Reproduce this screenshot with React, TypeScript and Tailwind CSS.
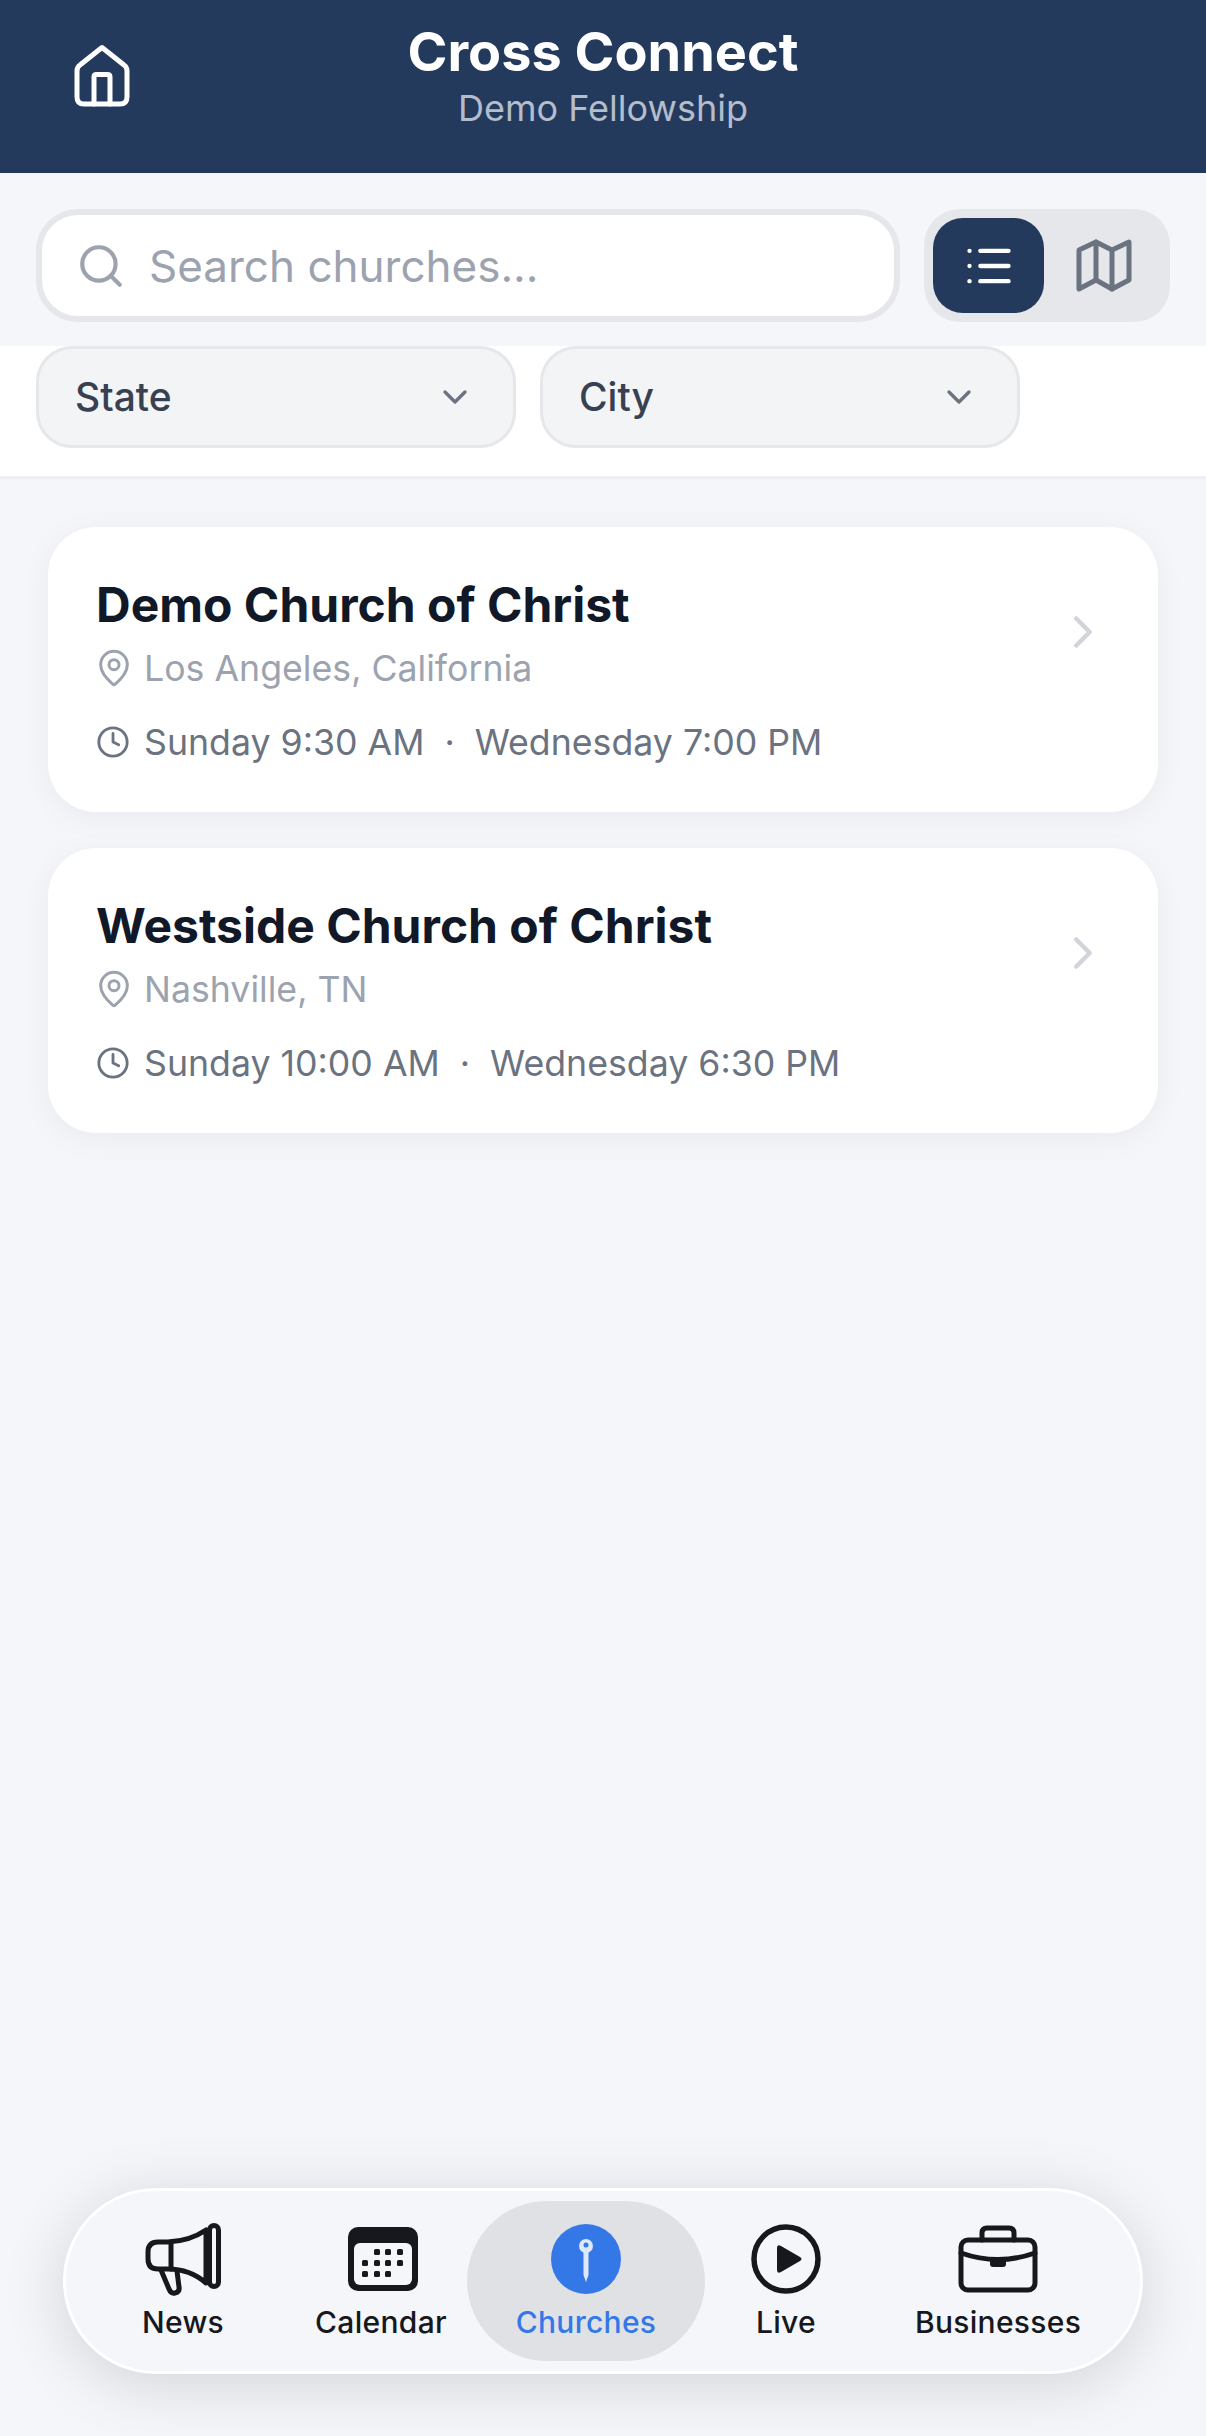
import React from 'react';
import { ChevronDown, ChevronRight, Clock, List, MapPin, Search } from 'lucide-react';

const churches = [
  { name: 'Demo Church of Christ', place: 'Los Angeles, California', sunday: 'Sunday 9:30 AM', midweek: 'Wednesday 7:00 PM' },
  { name: 'Westside Church of Christ', place: 'Nashville, TN', sunday: 'Sunday 10:00 AM', midweek: 'Wednesday 6:30 PM' },
];

function HomeIcon() {
  return (
    <svg width="60" height="64" viewBox="0 0 60 64" fill="none" stroke="#fff" strokeWidth="5" strokeLinejoin="round" strokeLinecap="round">
      <path d="M30 4.5 L52 22 Q55 24 55 28 V54 Q55 61 48 61 H12 Q5 61 5 54 V28 Q5 24 8 22 Z" />
      <path d="M22 61 V34 Q22 31.5 24.5 31.5 H35.5 Q38 31.5 38 34 V61" />
    </svg>
  );
}

function MapIcon() {
  return (
    <svg width="56" height="54" viewBox="0 0 56 54" fill="none" stroke="#6b7280" strokeWidth="5" strokeLinejoin="round" strokeLinecap="round">
      <path d="M3 11 L20 3 L36 11 L53 3 V41 L36 50 L20 41 L3 50 Z" />
      <path d="M20 3 V41" />
      <path d="M36 11 V50" />
    </svg>
  );
}

function MegaphoneIcon() {
  return (
    <svg width="78" height="76" viewBox="0 0 78 76" fill="none" stroke="#16181d" strokeWidth="5" strokeLinejoin="round" strokeLinecap="round">
      <path d="M14 21 H24 Q46 20 62 9 V62 Q46 48 24 48 H14 Q4 48 4 38 V31 Q4 21 14 21 Z" />
      <path d="M27 21 V48" />
      <rect x="65.5" y="4.5" width="9" height="61" rx="4.5" />
      <path d="M17 49 L25 68 Q27 73 31 72 Q36 71 35 66 L33 50" />
    </svg>
  );
}

function CalendarIcon() {
  const dots = [[29, 25], [40, 25], [52, 25], [17, 36], [29, 36], [40, 36], [52, 36], [17, 47], [29, 47], [40, 47]];
  return (
    <svg width="70" height="64" viewBox="0 0 70 64" fill="none" className="ml-[3px]">
      <rect x="0" y="0" width="70" height="64" rx="10" fill="#16181d" />
      <rect x="6" y="16" width="58" height="42" rx="6" fill="#f4f6fa" />
      {dots.map(([x, y]) => (
        <rect key={`${x}-${y}`} x={x - 3} y={y - 3} width="6" height="6" rx="1.5" fill="#16181d" />
      ))}
    </svg>
  );
}

function PinIcon() {
  return (
    <svg width="70" height="70" viewBox="0 0 70 70" fill="none">
      <circle cx="35" cy="35" r="35" fill="#3478e8" />
      <circle cx="35" cy="22" r="7" fill="#dfe8f7" />
      <circle cx="35" cy="21" r="2.5" fill="#3478e8" />
      <path d="M32.5 27 H37.5 V51 L35 58 L32.5 51 Z" fill="#dfe8f7" />
    </svg>
  );
}

function PlayIcon() {
  return (
    <svg width="70" height="70" viewBox="0 0 70 70" fill="none">
      <circle cx="35" cy="35" r="32" stroke="#16181d" strokeWidth="5.5" />
      <path d="M26 24 Q26 20 30 22 L49 33 Q52 35 49 37 L30 48 Q26 50 26 46 Z" fill="#16181d" />
    </svg>
  );
}

function BriefcaseIcon() {
  return (
    <svg width="80" height="68" viewBox="0 0 80 68" fill="none" stroke="#16181d" strokeWidth="5" strokeLinejoin="round" strokeLinecap="round">
      <rect x="3" y="15" width="74" height="50" rx="7" />
      <path d="M24 15 V8 Q24 3 29 3 H51 Q56 3 56 8 V15" />
      <path d="M3 28 Q40 41 77 28" />
      <path d="M32 35 H48 V39 Q48 42 45 42 H35 Q32 42 32 39 Z" fill="#16181d" stroke="none" />
    </svg>
  );
}

function ChurchCard({ church }: { church: (typeof churches)[number] }) {
  return (
    <div className="flex h-[285px] items-start justify-between rounded-[48px] bg-white pl-[48px] pr-[48px] pt-[49px] shadow-[0_6px_30px_rgba(17,24,39,0.05)]">
      <div className="flex flex-col">
        <h2 className="text-[48px] leading-[58px] font-bold text-[#111827]">{church.name}</h2>
        <div className="mt-[10px] flex items-center gap-[10px] text-[35.7px] leading-[48px] text-[#9ca3af]">
          <MapPin size={40} strokeWidth={1.8} className="-ml-[2px]" />
          <span>{church.place}</span>
        </div>
        <div className="mt-[26px] flex items-center text-[35.7px] leading-[48px] text-[#6b7280]">
          <Clock size={34} strokeWidth={2} className="mr-[14px]" />
          <span>{church.sunday}</span>
          <span className="mx-[20px]">·</span>
          <span>{church.midweek}</span>
        </div>
      </div>
      <ChevronRight size={54} strokeWidth={2} className="mt-[29px] text-[#d1d5db]" />
    </div>
  );
}

function FilterSelect({ label }: { label: string }) {
  return (
    <div className="flex h-[102px] w-[480px] items-center justify-between rounded-[36px] border-[3px] border-[#e5e7eb] bg-[#f3f4f6] pl-[36px] pr-[38px] text-[39px] font-medium text-[#374151]">
      <span>{label}</span>
      <ChevronDown size={40} strokeWidth={2} className="text-[#6b7280]" />
    </div>
  );
}

function NavItem({ icon, label, className }: { icon: React.ReactNode; label: string; className: string }) {
  return (
    <div className={`flex h-[160px] flex-col items-center justify-center ${className}`}>
      <div className="flex h-[74px] items-center justify-center">{icon}</div>
      <span className="mt-[7px] text-[30px] leading-[38px] font-medium tracking-[0.3px]">{label}</span>
    </div>
  );
}

export default function App() {
  return (
    <div className="relative flex min-h-[2436px] flex-col overflow-hidden bg-[#f4f6fa] font-[Inter,sans-serif]">
      <header className="relative flex h-[173px] flex-col items-center bg-[#243a5c] pt-[21px] text-center">
        <button className="absolute left-[72px] top-[43px]">
          <HomeIcon />
        </button>
        <h1 className="text-[54px] leading-[62px] font-bold text-white">Cross Connect</h1>
        <p className="mt-[3px] text-[36px] leading-[44px] text-[#b4bdcc]">Demo Fellowship</p>
      </header>

      <div className="flex h-[173px] items-start gap-[24px] pl-[36px] pr-[36px] pt-[36px]">
        <div className="flex h-[113px] w-[864px] items-center gap-[23px] rounded-[42px] border-[6px] border-[#e5e7eb] bg-white pl-[34px] text-[44px] text-[#9ca3af]">
          <Search size={50} strokeWidth={2} />
          <span>Search churches...</span>
        </div>
        <div className="flex h-[113px] w-[246px] items-center rounded-[36px] bg-[#e5e7eb] pl-[9px]">
          <div className="flex h-[95px] w-[111px] items-center justify-center rounded-[30px] bg-[#243a5c] text-white">
            <List size={52} strokeWidth={2} />
          </div>
          <div className="flex h-[95px] w-[120px] items-center justify-center">
            <MapIcon />
          </div>
        </div>
      </div>

      <div className="flex h-[133px] items-start gap-[24px] border-b-[3px] border-[#eef0f3] bg-white pl-[36px]">
        <FilterSelect label="State" />
        <FilterSelect label="City" />
      </div>

      <main className="flex flex-col gap-[36px] px-[48px] pt-[48px]">
        {churches.map((c) => (
          <ChurchCard key={c.name} church={c} />
        ))}
      </main>

      <nav className="absolute bottom-[62px] left-[63px] flex h-[186px] w-[1080px] items-center rounded-[93px] border-[3px] border-white bg-[#f4f6fa] text-[#16181d] shadow-[0_10px_64px_rgba(0,0,0,0.14)]">
        <NavItem icon={<MegaphoneIcon />} label="News" className="ml-[14px] w-[206px]" />
        <NavItem icon={<CalendarIcon />} label="Calendar" className="w-[190px]" />
        <NavItem icon={<PinIcon />} label="Churches" className="-ml-[9px] w-[238px] rounded-[80px] bg-[#e0e1e5] text-[#3478e8]" />
        <NavItem icon={<PlayIcon />} label="Live" className="w-[162px]" />
        <NavItem icon={<BriefcaseIcon />} label="Businesses" className="w-[262px]" />
      </nav>
    </div>
  );
}
